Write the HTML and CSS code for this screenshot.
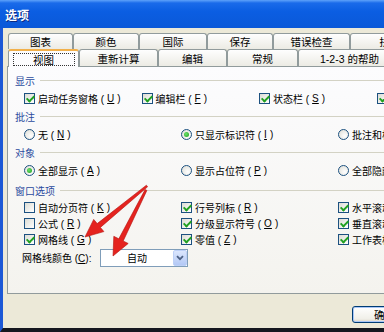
FILE: index.html
```html
<!DOCTYPE html>
<html lang="zh-CN">
<head>
    <meta charset="UTF-8">
    <title>选项</title>
    <link rel="stylesheet" href="styles.css">
</head>
<body>

    <div class="window">
        <div class="titlebar"><span>选项</span></div>

        <div class="dialog">
            <!-- Tabs -->
            <div class="tabs">
                <div class="tab-row back">
                    <div class="tab">图表</div>
                    <div class="tab">颜色</div>
                    <div class="tab">国际</div>
                    <div class="tab">保存</div>
                    <div class="tab">错误检查</div>
                    <div class="tab">拼写</div>
                </div>
                <div class="tab-row front">
                    <div class="tab active"><span class="focus">视图</span></div>
                    <div class="tab">重新计算</div>
                    <div class="tab">编辑</div>
                    <div class="tab">常规</div>
                    <div class="tab">1-2-3 的帮助</div>
                </div>
            </div>

            <!-- Panel -->
            <div class="panel">
                <div class="group-title">显示</div>
                <div class="row cols4">
                    <label class="item"><span class="box on"></span>启动任务窗格 (<u>U</u>)</label>
                    <label class="item"><span class="box on"></span>编辑栏 (<u>F</u>)</label>
                    <label class="item"><span class="box on"></span>状态栏 (<u>S</u>)</label>
                    <label class="item"><span class="box on"></span>任务栏中的窗口 (<u>W</u>)</label>
                </div>

                <div class="group-title">批注</div>
                <div class="row cols3">
                    <label class="item"><span class="radio"></span>无 (<u>N</u>)</label>
                    <label class="item"><span class="radio on"></span>只显示标识符 (<u>I</u>)</label>
                    <label class="item"><span class="radio"></span>批注和标识符 (<u>D</u>)</label>
                </div>

                <div class="group-title">对象</div>
                <div class="row cols3">
                    <label class="item"><span class="radio on"></span>全部显示 (<u>A</u>)</label>
                    <label class="item"><span class="radio"></span>显示占位符 (<u>P</u>)</label>
                    <label class="item"><span class="radio"></span>全部隐藏 (<u>D</u>)</label>
                </div>

                <div class="group-title spaced">窗口选项</div>
                <div class="row cols3 tight">
                    <label class="item"><span class="box"></span>自动分页符 (<u>K</u>)</label>
                    <label class="item"><span class="box on"></span>行号列标 (<u>R</u>)</label>
                    <label class="item"><span class="box on"></span>水平滚动条 (<u>T</u>)</label>
                </div>
                <div class="row cols3 tight">
                    <label class="item"><span class="box"></span>公式 (<u>R</u>)</label>
                    <label class="item"><span class="box on"></span>分级显示符号 (<u>O</u>)</label>
                    <label class="item"><span class="box on"></span>垂直滚动条 (<u>V</u>)</label>
                </div>
                <div class="row cols3 tight">
                    <label class="item"><span class="box on"></span>网格线 (<u>G</u>)</label>
                    <label class="item"><span class="box on"></span>零值 (<u>Z</u>)</label>
                    <label class="item"><span class="box on"></span>工作表标签 (<u>B</u>)</label>
                </div>

                <div class="color-row">
                    <span class="color-label">网格线颜色 (<u>C</u>):</span>
                    <div class="select">
                        <span class="value">自动</span>
                        <span class="drop">
                            <svg width="8" height="6" viewBox="0 0 8 6"><path d="M1 1.2 L4 4.2 L7 1.2" stroke="#4d6185" stroke-width="1.8" fill="none"/></svg>
                        </span>
                    </div>
                </div>
            </div>

            <div class="buttons">
                <button class="btn">确定</button>
            </div>
        </div>

        <!-- red arrows drawn over the dialog -->
        <svg class="arrows" width="384" height="332" viewBox="0 0 384 332">
            <polygon points="146.4,185.2 147.6,186.8 100.4,227.4 103.9,231.6 85,237 93.7,219.4 97.2,223.6" fill="#e5231f" stroke="#b3140f" stroke-width="0.6"/>
            <polygon points="145.1,189.6 146.9,190.4 123.2,241 128.2,243.5 113,256 113.8,236.3 118.8,238.8" fill="#e5231f" stroke="#b3140f" stroke-width="0.6"/>
        </svg>
    </div>

</body>
</html>
```

FILE: styles.css
```css
* {
    margin: 0;
    padding: 0;
    box-sizing: border-box;
}

html, body {
    width: 384px;
    height: 332px;
    overflow: hidden;
}

body {
    font-family: "Liberation Sans", "Noto Sans CJK SC", sans-serif;
    font-size: 10px;
    color: #000;
    background: #ece9d8;
}

u {
    text-decoration: underline;
}

.window {
    position: relative;
    width: 384px;
    height: 332px;
    overflow: hidden;
    display: flex;
    flex-direction: column;
}

.titlebar {
    height: 28px;
    flex: none;
    display: flex;
    align-items: center;
    padding: 1px 0 0 5px;
    background: linear-gradient(to bottom, #5ea2fa 0, #1a6bea 3px, #0b5ee2 40%, #0a58d8 100%);
    color: #fff;
    font-size: 12px;
    font-weight: bold;
    text-shadow: 1px 1px 0 #0c2a80;
}

.dialog {
    flex: 1;
    background: #ece9d8;
    border-left: 3px solid #1c58d6;
    border-bottom: 4px solid #15171f;
    padding-top: 5px;
}

/* Tabs */
.tabs {
    padding-left: 5px;
}

.tab-row {
    display: flex;
    align-items: flex-start;
}

.tab-row.back {
    height: 16px;
}

.tab-row.front {
    height: 17px;
}

.tab {
    flex: none;
    height: 100%;
    display: flex;
    align-items: center;
    justify-content: center;
    white-space: nowrap;
    font-size: 10.5px;
    border: 1px solid #919b9c;
    border-bottom: none;
    border-radius: 3px 3px 0 0;
    background: linear-gradient(to bottom, #fefefe, #ecebe4);
}

.back .tab:nth-child(1) { width: 65px; }
.back .tab:nth-child(2) { width: 66px; }
.back .tab:nth-child(3) { width: 68px; }
.back .tab:nth-child(4) { width: 66px; }
.back .tab:nth-child(5) { width: 77px; }
.back .tab:nth-child(6) { width: 80px; }

.front .tab:nth-child(1) { width: 71px; }
.front .tab:nth-child(2) { width: 79px; }
.front .tab:nth-child(3) { width: 69px; }
.front .tab:nth-child(4) { width: 71px; }
.front .tab:nth-child(5) { width: 103px; }

.tab.active {
    position: relative;
    z-index: 1;
    height: 18px;
    background: #fcfcfe;
    border-top: 2px solid #f2b04a;
}

.focus {
    display: block;
    width: 62px;
    height: 13px;
    line-height: 12px;
    text-align: center;
    border: 1px dotted #333;
}

/* Panel */
.panel {
    width: 400px;
    height: 228px;
    margin-left: 4px;
    padding: 4px 0 0 7px;
    border: 1px solid #919b9c;
    background: linear-gradient(to bottom, #fcfcfe, #f4f3ee);
}

.group-title {
    display: flex;
    align-items: center;
    height: 18px;
    color: #2b4a9e;
}

.group-title::after {
    content: "";
    flex: 1;
    height: 1px;
    margin-left: 5px;
    background: #d3d2c4;
}

.group-title.spaced {
    margin-top: 2px;
}

.row {
    display: grid;
    align-items: center;
    height: 18px;
    margin-left: 9px;
}

.row.tight {
    height: 16px;
}

.cols4 {
    grid-template-columns: repeat(4, 117.5px);
}

.cols3 {
    grid-template-columns: repeat(3, 157px);
}

.item {
    display: flex;
    align-items: center;
    gap: 3px;
    white-space: nowrap;
}

.box, .radio {
    flex: none;
    position: relative;
    width: 11px;
    height: 11px;
    border: 1px solid #1c5180;
}

.box {
    background: linear-gradient(135deg, #dcdcd4, #fff);
}

.box.on::after {
    content: "";
    position: absolute;
    left: 3px;
    top: 0;
    width: 3px;
    height: 6px;
    border: solid #21a121;
    border-width: 0 2px 2px 0;
    transform: rotate(45deg);
}

.radio {
    border-radius: 50%;
    background: radial-gradient(circle at 65% 65%, #fff, #dcdcd4);
}

.radio.on::after {
    content: "";
    position: absolute;
    left: 2px;
    top: 2px;
    width: 5px;
    height: 5px;
    border-radius: 50%;
    background: radial-gradient(circle at 40% 40%, #6be36b, #1c9a1c);
}

.color-row {
    display: flex;
    align-items: center;
    height: 19px;
    margin: 1px 0 0 7px;
}

.color-label {
    width: 78px;
    white-space: nowrap;
}

.select {
    display: flex;
    width: 88px;
    height: 18px;
    border: 1px solid #7f9db9;
    background: #fff;
}

.select .value {
    flex: 1;
    display: flex;
    align-items: center;
    justify-content: center;
}

.select .drop {
    width: 14px;
    display: flex;
    align-items: center;
    justify-content: center;
    border: 1px solid #bdd0f7;
    border-radius: 2px;
    background: linear-gradient(to bottom, #dbe6fd, #b3c8f5);
}

/* Buttons */
.buttons {
    display: flex;
    padding-left: 349px;
    margin-top: 12px;
}

.btn {
    flex: none;
    width: 65px;
    height: 17px;
    font-family: inherit;
    font-size: 10.5px;
    color: #000;
    border: 1px solid #003c74;
    border-radius: 3px;
    background: linear-gradient(to bottom, #fff, #f0efe8 80%, #d8d2c4);
    box-shadow: inset 0 0 0 1px #a9c6f6;
}

.arrows {
    position: absolute;
    left: 0;
    top: 0;
    pointer-events: none;
}
```
